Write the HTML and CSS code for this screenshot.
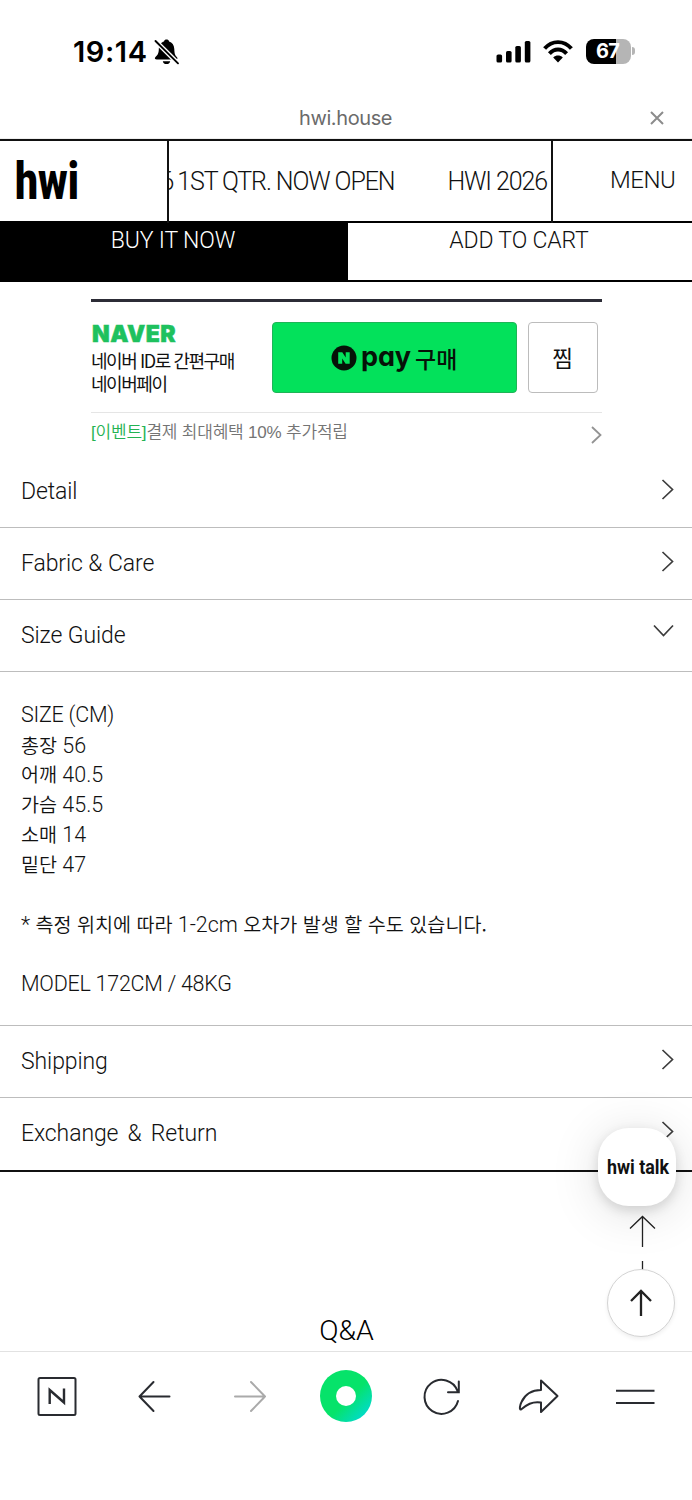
FILE: index.html
```html
<!DOCTYPE html>
<html lang="ko">
<head>
<meta charset="utf-8">
<title>hwi.house</title>
<link rel="stylesheet" href="styles.css">
</head>
<body>
<div class="screen">
  <div class="status">
    <span class="clock">19:14</span>
    <svg class="bell" width="26" height="28" viewBox="0 0 26 28">
      <path d="M3 20.500c-2.200 0-2.600-1.300-1.700-2.200 2.600-2.600 3.400-4 3.500-8C5 5.500 7.200 3.300 10 2.500 10.300 1 11.300.5 12.500.5s2.300.5 2.600 2c3 .8 5 3.200 5.200 7.500.1 4.500.8 6.500 2.700 8.300.9.900.4 2.200-.8 2.200zM8.800 22.200h7.400c-.3 1.900-1.800 2.900-3.700 2.900s-3.400-1-3.700-2.900z"/>
      <path d="M0 .5 24.500 24.800" stroke="#fff" stroke-width="4.600"/>
      <path d="M1.500 2 24 24.300" stroke="#000" stroke-width="1.900" stroke-linecap="round"/>
    </svg>
    <svg class="signal" width="36" height="24" viewBox="0 0 36 24">
      <rect x=".5" y="14.500" width="5.600" height="8" rx="1.600"/><rect x="10" y="11" width="5.600" height="11.500" rx="1.600"/><rect x="19.300" y="6" width="5.600" height="16.500" rx="1.600"/><rect x="28.800" y="1" width="5.600" height="21.500" rx="1.600"/>
    </svg>
    <svg class="wifi" width="30" height="24" viewBox="0 0 30 24">
      <g fill="none" stroke="#000" stroke-width="3.900"><path d="M1.600 8.600C9-.1 21-.1 28.400 8.600"/><path d="M6.400 13.600C11.400 8.100 18.600 8.100 23.600 13.600"/></g>
      <path d="M10.200 17.500c2.900-2.600 6.700-2.600 9.600 0L15 22.500z"/>
    </svg>
    <div class="battery"><span>67</span></div><i class="battery-tip"></i>
  </div>
  <div class="address">
    <span class="host">hwi.house</span>
    <svg class="close" width="14" height="14" viewBox="0 0 14 14"><path d="M1 1l12 12M13 1L1 13" stroke="#8c8c8c" stroke-width="2" fill="none"/></svg>
  </div>
  <header class="header">
    <div class="logo"><span>hwi</span></div>
    <div class="ticker"><span class="ticker-a"><span class="year-end">6 </span>1ST QTR. NOW OPEN</span><span class="ticker-b">HWI 2026</span></div>
    <div class="menu">MENU</div>
  </header>
  <div class="actions"><div class="buy">BUY IT NOW</div><div class="cart">ADD TO CART</div></div>
  <section class="npay">
    <div class="npay-main">
      <div class="npay-copy"><b>NAVER</b><span class="copy-a">네이버 ID로 간편구매</span><span class="copy-b">네이버페이</span></div>
      <div class="npay-button">
        <svg width="26" height="26" viewBox="0 0 26 26"><circle cx="13" cy="13" r="12.500" fill="#061208"/><path d="M7.200 18.700V7.300h4.100l3.400 5.100V7.300h4v11.400h-4.100l-3.400-5.100v5.100z" fill="#03e15b"/></svg>
        <span class="pay">pay</span><span class="purchase">구매</span>
      </div>
      <div class="wish">찜</div>
    </div>
    <div class="event"><span class="event-text"><em>[이벤트]</em>결제 최대혜택 10% 추가적립</span>
      <svg width="11" height="18" viewBox="0 0 11 18"><path d="M1 1l8.500 8L1 17" fill="none" stroke="#939393" stroke-width="1.800"/></svg></div>
  </section>
  <main class="accordion">
    <div class="row first"><span>Detail</span><svg class="chev" width="13" height="21" viewBox="0 0 13 21"><path d="M1.500 1l10 9.500-10 9.500"/></svg></div>
    <div class="row"><span>Fabric &amp; Care</span><svg class="chev" width="13" height="21" viewBox="0 0 13 21"><path d="M1.500 1l10 9.500-10 9.500"/></svg></div>
    <div class="row"><span>Size Guide</span><svg class="chev open" width="21" height="13" viewBox="0 0 21 13"><path d="M1 1.500l9.500 10 9.500-10"/></svg></div>
    <div class="panel">
      <p class="size">SIZE (CM)</p>
      <p><span class="ko">총장</span> 56</p>
      <p><span class="ko">어깨</span> 40.5</p>
      <p><span class="ko">가슴</span> 45.5</p>
      <p><span class="ko">소매</span> 14</p>
      <p><span class="ko">밑단</span> 47</p>
      <p class="note">* <span class="ko">측정 위치에 따라</span> 1-2cm <span class="ko">오차가 발생 할 수도 있습니다.</span></p>
      <p class="model">MODEL 172CM / 48KG</p>
    </div>
    <div class="row"><span>Shipping</span><svg class="chev" width="13" height="21" viewBox="0 0 13 21"><path d="M1.500 1l10 9.500-10 9.500"/></svg></div>
    <div class="row last"><span class="exchange">Exchange &amp; Return</span><svg class="chev" width="13" height="21" viewBox="0 0 13 21"><path d="M1.500 1l10 9.500-10 9.500"/></svg></div>
  </main>
  <div class="qna"><span>Q&amp;A</span></div>
  <nav class="toolbar">
    <svg width="96" height="90" viewBox="9 0 96 90" fill="none" stroke="#292b30" stroke-width="2"><rect x="38.500" y="26" width="37" height="37" rx="1.500"/><path stroke-width="2.400" d="M49.700 52V38L64 50.500V36.500"/></svg>
    <svg width="96" height="90" viewBox="105 0 96 90" fill="none" stroke="#292b30" stroke-width="2" stroke-linecap="round" stroke-linejoin="round"><path d="M169.500 44.500H139.500M153.500 30L139.500 44.500l14 14.500"/></svg>
    <svg width="96" height="90" viewBox="201 0 96 90" fill="none" stroke="#aaa" stroke-width="2" stroke-linecap="round" stroke-linejoin="round"><path d="M235 44.500h30M251 30l14 14.500L251 59"/></svg>
    <div class="home"><i></i></div>
    <svg width="96" height="90" viewBox="393 0 96 90" fill="none" stroke="#292b30" stroke-width="2" stroke-linecap="round"><path d="M458 49a17 17 0 1 1-.5-10M458.800 29.500V40.200H448"/></svg>
    <svg width="96" height="90" viewBox="489 0 96 90" fill="none" stroke="#292b30" stroke-width="2" stroke-linejoin="round"><path d="M541 28.500L557.500 44 541 60V50.500C532 49 526.500 53 521 57.500 519 58 520 53 521.500 50 525 42.500 531 38 541 38z"/></svg>
    <svg width="96" height="90" viewBox="585 0 96 90" fill="none" stroke="#292b30" stroke-width="2"><path d="M616 38.700h38.500M616 51h38.500"/></svg>
  </nav>
  <svg class="page-up" width="28" height="56" viewBox="0 0 28 56"><path d="M13.500 32V1.500M1 13.500L13.500 1.500 26 13.500M13.500 46v10" fill="none" stroke="#222" stroke-width="1.300"/></svg>
  <div class="talk"><span>hwi talk</span></div>
  <div class="to-top"><svg width="24" height="28" viewBox="0 0 24 28"><path d="M12 27V2M2 12L12 2l10 10" fill="none" stroke="#222" stroke-width="2.300"/></svg></div>
</div>
</body>
</html>
```
FILE: styles.css
```css
* { box-sizing: border-box; }
body { margin: 0; background: #fff; }
p { margin: 0; }
svg { display: block; flex: none; }
span { white-space: nowrap; }
.screen {
  position: relative; width: 692px; height: 1500px; overflow: hidden;
  display: flex; flex-direction: column; background: #fff; color: #111;
  font-family: Roboto, "Noto Sans CJK KR", sans-serif; font-weight: 300;
}
.screen > * { flex: none; }
.status { height: 96px; padding-top: 39px; display: flex; align-items: flex-start; color: #000; }
.clock { width: 74px; margin-left: 73px; font: 600 29px/26px Inter, sans-serif; letter-spacing: .6px; }
.bell { margin-left: 6.500px; }
.signal { margin: 1px 0 0 316.500px; }
.wifi { margin: 1px 0 0 11px; }
.battery {
  width: 45px; height: 25px; margin-left: 13px; border-radius: 8px;
  background: linear-gradient(90deg, #000 67%, #b5b5b5 67%);
  color: #fff; text-align: center; font: 700 20px/25px Inter, sans-serif; letter-spacing: -.8px; padding-right: 2px;
}
.battery-tip { width: 3px; height: 8px; margin: 8px 0 0 1px; border-radius: 0 4px 4px 0; background: #b5b5b5; }
.address { height: 43px; display: flex; align-items: center; padding-left: 299px; border-bottom: 1px solid #eee; }
.host { width: 93px; padding-top: 2px; font: 400 20px/24px Inter, sans-serif; color: #6b6b6b; letter-spacing: -.4px; }
.close { margin: 2px 0 0 258px; }
.header { height: 84px; display: grid; grid-template-columns: 167px 386px 1fr; border-top: 2px solid #111; border-bottom: 2px solid #000; }
.logo { padding-left: 15px; font-weight: 900; font-size: 51px; line-height: 82px; color: #000; }
.logo span { display: inline-block; transform: scaleX(.8); transform-origin: 0 50%; }
.ticker { border: solid #111; border-width: 0 2px; overflow: hidden; display: flex; justify-content: flex-end; gap: 53px; padding-right: 4px; font-size: 25px; line-height: 81px; letter-spacing: -1.100px; }
.year-end { word-spacing: -1px; }
.menu { padding-left: 57px; font-size: 24px; line-height: 79px; letter-spacing: -.5px; }
.actions { height: 59px; display: grid; grid-template-columns: 348px 1fr; border-bottom: 2px solid #000; font-size: 23px; line-height: 36px; letter-spacing: -.15px; text-align: center; }
.actions > div { padding-right: 2px; height: 57px; }
.buy { background: #000; color: #fff; }
.npay { width: 511px; height: 173px; margin: 17px 0 0 91px; border-top: 3px solid #2c2c36; }
.npay-main { height: 111px; display: flex; align-items: flex-start; padding-top: 20px; border-bottom: 1px solid #e5e5e5; }
.npay-copy { width: 181px; display: flex; flex-direction: column; color: #111; font: 400 18px/23px "Noto Sans CJK KR", sans-serif; letter-spacing: -1.450px; }
.npay-copy b { font: 900 23px/25px Inter, sans-serif; letter-spacing: .5px; padding-left: 1px; color: #1ec15e; -webkit-text-stroke: .5px #1ec15e; margin-bottom: 2px; }
.npay-button { width: 245px; height: 71px; border: 1px solid #1fb457; border-radius: 4px; background: #03e15b; display: flex; align-items: center; padding-left: 58px; color: #061208; }
.pay { width: 49px; margin: -2px 0 0 4px; font: 700 27px/30px Inter, sans-serif; font-feature-settings: "cv11"; letter-spacing: -.1px; }
.purchase { margin: 0 0 0 5px; font: 500 23px/30px "Noto Sans CJK KR", sans-serif; }
.wish { width: 70px; height: 71px; margin-left: 11px; border: 1px solid #bcbcbc; border-radius: 4px; padding-right: 1px; text-align: center; font: 400 22.500px/69px "Noto Sans CJK KR", sans-serif; }
.event { display: flex; justify-content: space-between; padding-top: 6px; color: #747474; font: 350 17px/28px "Liberation Sans", "Noto Sans CJK KR", sans-serif; letter-spacing: -.2px; }
.event em { font-style: normal; color: #24b252; }
.event svg { margin-top: 7px; }
.row { height: 72.200px; display: flex; justify-content: space-between; align-items: flex-start; padding: 21px 18px 0 21px; border-bottom: 1.500px solid #bdbdbd; font-size: 23px; line-height: 30px; letter-spacing: -.1px; }
.row.first { height: 56px; padding-top: 5px; }
.chev { fill: none; stroke: #3c3c3c; stroke-width: 1.700; margin-top: 2px; }
.chev.open { margin-top: 3px; }
.row.last { height: 73.500px; border-bottom: 2px solid #111; }
.exchange { word-spacing: 3.700px; }
.panel { height: 353.500px; padding: 27.300px 0 0 21px; border-bottom: 1.500px solid #bdbdbd; font-size: 21.500px; line-height: 29.900px; }
.panel p { height: 29.900px; }
.panel .ko { font-family: "Noto Sans CJK KR", sans-serif; font-size: 19.600px; font-weight: 350; }
.panel .size, .panel .model { letter-spacing: -.25px; }
.panel .note, .panel .model { margin-top: 29.900px; }
.qna { height: 180.500px; padding: 140.500px 0 0 1px; text-align: center; font-size: 28.500px; line-height: 38px; border-bottom: 1px solid #e2e2e2; color: #000; }
.toolbar { display: flex; height: 90px; padding-left: 9px; }
.home { width: 52px; height: 52px; margin: 18px 21px 0 23px; border-radius: 50%; background: linear-gradient(135deg, #06e36a 55%, #00d9e0 95%); display: grid; place-items: center; }
.home i { width: 20px; height: 20px; border-radius: 50%; background: #fff; }
.page-up { position: absolute; left: 629px; top: 1215px; }
.talk { position: absolute; left: 598px; top: 1128px; width: 78px; height: 78px; border-radius: 31px; background: #fff; box-shadow: 0 4px 12px #0002, 0 6px 50px #0002; font-size: 21px; font-weight: 700; line-height: 79px; color: #111; }
.talk span { display: inline-block; margin-left: 9px; transform: scaleX(.85); transform-origin: 0 50%; }
.to-top { position: absolute; left: 607px; top: 1269px; width: 68px; height: 68px; border: 1px solid #d4d4d4; border-radius: 50%; background: #fff; box-shadow: 0 2px 4px #0001; display: grid; place-items: center; }
```
